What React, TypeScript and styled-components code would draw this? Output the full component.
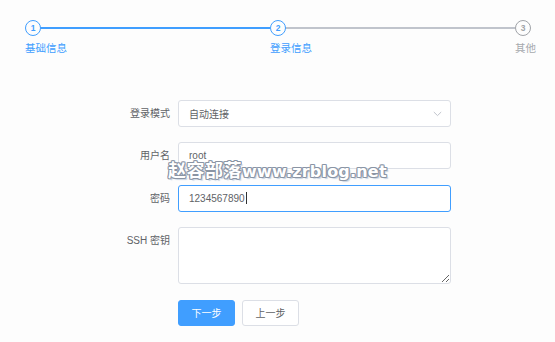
import React from 'react';
import styled, { createGlobalStyle } from 'styled-components';

const GlobalStyle = createGlobalStyle`
  html, body {
    margin: 0;
    padding: 0;
    background: #fdfdfd;
  }
  body {
    font-family: "Liberation Sans", "Noto Sans CJK SC", sans-serif;
    width: 555px;
    height: 342px;
    overflow: hidden;
  }
`;

const Page = styled.div`
  position: relative;
  width: 555px;
  height: 342px;
`;

// steps
const StepsBar = styled.div`
  display: flex;
  padding: 20px 19px 0 25px;
`;
const Step = styled.div<{ $last?: boolean }>`
  position: relative;
  flex: ${(p) => (p.$last ? '0 0 auto' : '1 1 0')};
`;
const StepHead = styled.div`
  position: relative;
  height: 16px;
`;
const StepLine = styled.div<{ $color: string }>`
  position: absolute;
  top: 7.3px;
  left: 8px;
  right: 0;
  height: 1.4px;
  background: ${(p) => p.$color};
`;
const StepIcon = styled.div<{ $color: string }>`
  position: relative;
  z-index: 1;
  box-sizing: border-box;
  width: 16px;
  height: 16px;
  border: 1.4px solid ${(p) => p.$color};
  border-radius: 50%;
  background: #fdfdfd;
  color: ${(p) => p.$color};
  font-size: 8.5px;
  font-weight: bold;
  display: flex;
  align-items: center;
  justify-content: center;
`;
const StepTitle = styled.div<{ $color: string }>`
  margin-top: 5px;
  font-size: 10.5px;
  line-height: 14px;
  color: ${(p) => p.$color};
  white-space: nowrap;
`;

// form
const Form = styled.div`
  display: grid;
  grid-template-columns: 78px 273px;
  row-gap: 15.3px;
  margin: 45px 0 0 100px;
`;
const Label = styled.div`
  box-sizing: border-box;
  padding-right: 8px;
  text-align: right;
  font-size: 10px;
  line-height: 27px;
  color: #606266;
`;
const InputBox = styled.div<{ $focused?: boolean }>`
  box-sizing: border-box;
  height: 27px;
  border: 1px solid ${(p) => (p.$focused ? '#409eff' : '#dcdfe6')};
  border-radius: 3px;
  background: #fff;
  display: flex;
  align-items: center;
  padding: 0 8px 0 10px;
  font-size: 10px;
  color: #606266;
`;
const SelectText = styled.span`
  flex: 1;
`;
const Caret = styled.span`
  display: inline-block;
  width: 1px;
  height: 12px;
  margin-left: 1px;
  background: #303133;
`;
const TextArea = styled.textarea`
  box-sizing: border-box;
  display: block;
  width: 273px;
  height: 57px;
  border: 1px solid #dcdfe6;
  border-radius: 3px;
  background: #fff;
  padding: 4px 10px;
  font-family: inherit;
  font-size: 10px;
  color: #606266;
  resize: vertical;
  outline: none;
`;
const Buttons = styled.div`
  grid-column: 2;
  display: flex;
  gap: 7px;
  margin-top: 0.7px;
`;
const Button = styled.button<{ $primary?: boolean }>`
  box-sizing: border-box;
  width: 57px;
  height: 26px;
  border-radius: 3px;
  border: 1px solid ${(p) => (p.$primary ? '#409eff' : '#dcdfe6')};
  background: ${(p) => (p.$primary ? '#409eff' : '#fff')};
  color: ${(p) => (p.$primary ? '#fff' : '#606266')};
  font-family: inherit;
  font-size: 10px;
  padding: 0;
  cursor: pointer;
`;

// watermark lying over the form
const Watermark = styled.div`
  position: absolute;
  left: 168px;
  top: 156px;
  white-space: nowrap;
  font-weight: bold;
  line-height: 26px;
  color: #fff;
  text-shadow:
    1px 0 0 #8a94a3, -1px 0 0 #8a94a3, 0 1px 0 #8a94a3, 0 -1px 0 #8a94a3,
    1px 1px 0 #9aa7ba, -1px -1px 0 #9aa7ba, 1px -1px 0 #9aa7ba, -1px 1px 0 #9aa7ba,
    2px 2px 1px rgba(110, 140, 180, 0.35);
  pointer-events: none;
`;
const MarkCn = styled.span`
  font-family: "Noto Sans CJK SC", sans-serif;
  font-size: 18px;
  letter-spacing: 0.5px;
`;
const MarkEn = styled.span`
  font-family: "DejaVu Sans", sans-serif;
  font-size: 16px;
  letter-spacing: 0.2px;
`;

const BLUE = '#409eff';
const GRAY = '#b4b7bd';

const steps = [
  { n: 1, title: '基础信息', color: BLUE, line: BLUE },
  { n: 2, title: '登录信息', color: BLUE, line: '#c0c4cc' },
  { n: 3, title: '其他', color: GRAY, line: '' },
];

const Chevron = () => (
  <svg width="9" height="6" viewBox="0 0 9 6">
    <polyline points="0.8,1 4.5,4.6 8.2,1" fill="none" stroke="#c0c4cc" strokeWidth="1" />
  </svg>
);

const App = () => {
  return (
    <Page>
      <GlobalStyle />
      <StepsBar>
        {steps.map((s, i) => {
          const last = i === steps.length - 1;
          return (
            <Step key={s.n} $last={last}>
              <StepHead>
                {!last && <StepLine $color={s.line} />}
                <StepIcon $color={last ? '#a0a3a8' : s.color}>{s.n}</StepIcon>
              </StepHead>
              <StepTitle $color={last ? '#a6a9ad' : s.color}>{s.title}</StepTitle>
            </Step>
          );
        })}
      </StepsBar>

      <Form>
        <Label>登录模式</Label>
        <InputBox>
          <SelectText>自动连接</SelectText>
          <Chevron />
        </InputBox>

        <Label>用户名</Label>
        <InputBox>root</InputBox>

        <Label>密码</Label>
        <InputBox $focused>
          1234567890
          <Caret />
        </InputBox>

        <Label>SSH 密钥</Label>
        <TextArea />

        <Buttons>
          <Button $primary>下一步</Button>
          <Button>上一步</Button>
        </Buttons>
      </Form>

      <Watermark>
        <MarkCn>赵容部落</MarkCn>
        <MarkEn>www.zrblog.net</MarkEn>
      </Watermark>
    </Page>
  );
};

export default App;
